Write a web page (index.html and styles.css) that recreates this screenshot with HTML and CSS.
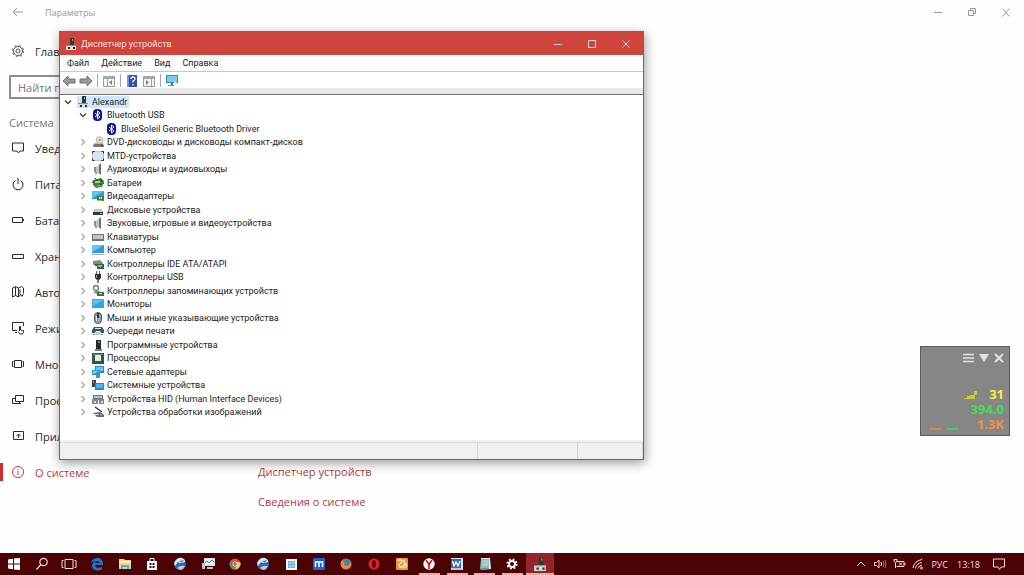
FILE: index.html
```html
<!DOCTYPE html>
<html lang="ru">
<head>
<meta charset="utf-8">
<title>Диспетчер устройств</title>
<link rel="stylesheet" href="styles.css">
</head>
<body>
<svg class="sprite" aria-hidden="true">
  <defs>
    <symbol id="i-pc" viewBox="0 0 12 12"><path d="M5 0h4v7H5z" fill="#303838"/><path d="M7 1h1v2H7z" fill="#5fc26c"/><path d="M1 7h10v5H1z" fill="#d9dcde"/><path d="M1 7h10v1H1z" fill="#8b9094"/><path d="M3 9h2v2H3zM8 9h2v2H8z" fill="#333"/></symbol>
    <symbol id="i-bt" viewBox="0 0 12 12"><rect x="1" y="0" width="9" height="12" rx="4" fill="#0714a8"/><path d="M3 4l5 4-2.500 2V2L8 4 3 8" fill="none" stroke="#fff"/></symbol>
    <symbol id="i-dvd" viewBox="0 0 12 12"><circle cx="7.500" cy="4" r="3.500" fill="#e0e0d8" stroke="#999" stroke-width=".6"/><circle cx="7.500" cy="4" r="1" fill="#888"/><path d="M2 7h9l1 4H1z" fill="#777"/><path d="M2 7h9v1H2z" fill="#bbb"/><path d="M9 9h2v1H9z" fill="#222"/></symbol>
    <symbol id="i-mtd" viewBox="0 0 12 12"><path d="M0 1h12v10H0z" fill="#a9c8dd"/><path d="M1 2h10v8H1z" fill="#d3e6f3"/><path d="M.5 3.500v-2H2.500M9.500 1.500h2v2M11.500 8.500v2H9.500M2.500 10.500h-2v-2" fill="none" stroke="#222b33"/></symbol>
    <symbol id="i-audio" viewBox="0 0 12 12"><path d="M2 4h2v5H2z" fill="#8a8d8f"/><path d="M4 4l5-4v12L4 9z" fill="#c3c6c8"/><path d="M7 2l2-2v12L7 10z" fill="#707375"/><path d="M3 9h2v2H3z" fill="#999"/></symbol>
    <symbol id="i-bat" viewBox="0 0 12 12"><path d="M1 3l8-2 3 3-2 6-6 1-3-3z" fill="#46813e"/><path d="M0 5h7M3 1l6 7M8 2l4 5" stroke="#1f3a20"/><path d="M3 4h5v2H3z" fill="#9fd57c"/><path d="M5 8h4v2H5z" fill="#5fa455"/></symbol>
    <symbol id="i-video" viewBox="0 0 12 12"><path d="M0 1h12v8H0z" fill="#2c9de0"/><path d="M0 1h12L0 8z" fill="#63c3ee"/><path d="M5 6h7v5H5z" fill="#3c7b45"/><path d="M7 7h3v2H7z" fill="#bad6a5"/><path d="M5 10h5v1H5z" fill="#d3ac38"/></symbol>
    <symbol id="i-disk" viewBox="0 0 12 12"><path d="M2 5h8l1 3H1z" fill="#c5c7c8"/><path d="M1 8h10v3H1z" fill="#393c3e"/><path d="M8 9h2v1H8z" fill="#85c9a0"/></symbol>
    <symbol id="i-key" viewBox="0 0 12 12"><path d="M0 3h12v7H0z" fill="#6e7376"/><path d="M1 4h10v4H1z" fill="#bfc4c7"/></symbol>
    <symbol id="i-comp" viewBox="0 0 12 12"><path d="M0 1h12v8H0z" fill="#2c9de0"/><path d="M0 1h12L0 8z" fill="#67c6f2"/><path d="M0 10h12v1H0z" fill="#aab2b7"/></symbol>
    <symbol id="i-ide" viewBox="0 0 12 12"><path d="M1 3l7-1 3 3v2H1z" fill="#828b87"/><path d="M3 6h9v5H5V8H3z" fill="#2c6a42"/><path d="M6 7h4v2H6z" fill="#95b69c"/></symbol>
    <symbol id="i-usb" viewBox="0 0 12 12"><path d="M4 0h1v3H4zM7 0h1v3H7z" fill="#666"/><path d="M3 3h6v4L7 9H5L3 7z" fill="#2c2f30"/><path d="M6 8v4" stroke="#555" stroke-width="1.500"/><path d="M4 4h1v3H4z" fill="#999"/></symbol>
    <symbol id="i-store" viewBox="0 0 12 12"><circle cx="4" cy="3" r="2.500" fill="none" stroke="#687268" stroke-width="1.300"/><path d="M1 8l4-3 6 3-5 1z" fill="#869087"/><path d="M5 7h7v4H5z" fill="#37724a"/><path d="M7 8h3v1H7z" fill="#cce0c4"/></symbol>
    <symbol id="i-mon" viewBox="0 0 12 12"><path d="M0 1h12v9H0z" fill="#5b9cc4"/><path d="M1 2h10v7H1z" fill="#2ea6ec"/><path d="M1 2h10L1 8z" fill="#5cc2f5"/></symbol>
    <symbol id="i-mouse" viewBox="0 0 12 12"><rect x="2.500" y=".5" width="7" height="11" rx="3.500" fill="#9ba4ab" stroke="#44505a"/><path d="M6 1v5" stroke="#263848" stroke-width="2"/><path d="M4.500 4v5" stroke="#dbe0e4"/></symbol>
    <symbol id="i-print" viewBox="0 0 12 12"><path d="M2 2h8l2 3v3H9L8 6H4L3 8H0V5z" fill="#46545c"/><path d="M3 3h6v1H3z" fill="#dfe6ea"/><path d="M4 7h4l1 3H3z" fill="#a4d8ee"/><path d="M1 9h2v1H1zM9 9h2v1H9z" fill="#78858c"/></symbol>
    <symbol id="i-soft" viewBox="0 0 12 12"><path d="M4 1h5v9H4z" fill="#252c2b"/><path d="M6 2h2v2H6z" fill="#54a65e"/><path d="M3 10h7v2H3z" fill="#777e7b"/></symbol>
    <symbol id="i-cpu" viewBox="0 0 12 12"><path d="M0 1h12v11H0z" fill="#2c5b3d"/><path d="M3 3h6v6H3z" fill="#e6ece5"/><path d="M1 2h10v1H1z" fill="#5d8a68"/></symbol>
    <symbol id="i-net" viewBox="0 0 12 12"><path d="M3 0h9v7H3z" fill="#1f8fcb"/><path d="M4 1h7v4H4z" fill="#69c4f0"/><path d="M0 4h8v5H0z" fill="#279bda"/><path d="M1 5h6L1 8z" fill="#88d5f8"/><path d="M4 9h4v3H4z" fill="#4a9e88"/></symbol>
    <symbol id="i-sys" viewBox="0 0 12 12"><path d="M0 1h4v7H0z" fill="#3c4549"/><path d="M1 2h1v2H1z" fill="#80d38d"/><path d="M3 4h9v7H3z" fill="#2288c7"/><path d="M4 5h7v4H4z" fill="#49b4ef"/></symbol>
    <symbol id="i-hid" viewBox="0 0 12 12"><path d="M1 2h10v5H1z" fill="#70777b"/><path d="M2 3h8v2H2z" fill="#bbc1c4"/><path d="M0 6h6v5H0zM7 6h5v5H7z" fill="#80898c"/><path d="M2 8h2v2H2zM9 8h2v2H9z" fill="#d6e2dc"/></symbol>
    <symbol id="i-img" viewBox="0 0 12 12"><path d="M3 1l7 5" stroke="#303536" stroke-width="1.500"/><path d="M1 7l7-1 4 3v2H5z" fill="#666c6e"/><path d="M2 8h5v1H2z" fill="#ddd"/><circle cx="9" cy="9" r="1.200" fill="#d6dadb" stroke="#333" stroke-width=".6"/></symbol>
    <symbol id="open" viewBox="0 0 8 8"><path d="M1 2.500l3 3 3-3" fill="none" stroke="#404040" stroke-width="1.300"/></symbol>
    <symbol id="shut" viewBox="0 0 8 8"><path d="M2.500 1l3 3-3 3" fill="none" stroke="#a2a2a2" stroke-width="1.200"/></symbol>
    <symbol id="globe" viewBox="0 0 14 14"><circle cx="7" cy="7" r="6" fill="#2e69a5"/><path d="M1 6q3-6 8-5 4 2 3 4-5 2-7 0L2 9z" fill="#d7e5ef"/><path d="M4 11q3-3 8-2-2 4-5 4z" fill="#b9cede"/><path d="M6 4l5-1-2 3z" fill="#4f94c9"/></symbol>
    <symbol id="gear" viewBox="0 0 14 14"><circle cx="7" cy="7" r="4.500" fill="none" stroke="#555"/><circle cx="7" cy="7" r="2" fill="none" stroke="#555"/><circle cx="7" cy="7" r="5.500" fill="none" stroke="#777" stroke-width="1.200" stroke-dasharray="2.160 2.160"/></symbol>
  </defs>
</svg>

<div class="desktop">
  <main class="settings">
    <header class="settings-bar">
      <button class="plain" aria-label="Назад"><svg class="ic14" viewBox="0 0 14 14"><path d="M12 7H2M6 3L2 7l4 4"/></svg></button>
      <span class="settings-title">Параметры</span>
      <div class="settings-controls">
        <button class="plain" aria-label="Свернуть"><svg class="ic14" viewBox="0 0 14 14"><path d="M3 7.500h8"/></svg></button>
        <button class="plain" aria-label="Восстановить"><svg class="ic14" viewBox="0 0 14 14"><path d="M3.500 5.500h5v5h-5zM5.500 5V3.500h5v5H9"/></svg></button>
        <button class="plain" aria-label="Закрыть"><svg class="ic14" viewBox="0 0 14 14"><path d="M3.500 3.500l7 8M10.500 3.500l-7 8"/></svg></button>
      </div>
    </header>
    <div class="settings-body">
      <nav class="sidebar">
        <a class="nav home" href="#"><svg class="ic14"><use href="#gear"/></svg>Глав</a>
        <input class="search" type="text" placeholder="Найти параметр" aria-label="Найти параметр">
        <h2 class="group">Система</h2>
        <a class="nav" href="#"><svg class="ic14" viewBox="0 0 14 14"><path d="M1.500 2h11v8H9l-1.500 2L6 10H1.500z"/></svg>Увед</a>
        <a class="nav" href="#"><svg class="ic14" viewBox="0 0 14 14"><path d="M4.500 3.500a5 5 0 1 0 5 0M7 1v6"/></svg>Пита</a>
        <a class="nav" href="#"><svg class="ic14" viewBox="0 0 14 14"><path d="M1.500 4.500h10v5h-10zM12.500 6v2"/></svg>Бата</a>
        <a class="nav" href="#"><svg class="ic14" viewBox="0 0 14 14"><path d="M1.500 5.500h11v4h-11z"/></svg>Хран</a>
        <a class="nav" href="#"><svg class="ic14" viewBox="0 0 14 14"><path d="M1.500 3l3-1.500 3 1.500v9l-3-1.500-3 1.500zM4.500 2v8.500M7.500 3l3-1.500 2 1.500v5M7.500 11.500l2-1M9 4.500v4l2 3 1.500-3"/></svg>Авто</a>
        <a class="nav" href="#"><svg class="ic14" viewBox="0 0 14 14"><path d="M6 9.500H1.500v-8h11V5M4 11.500h2M8.500 10V5.500h1V9l3 .5v2l-1 1.500H9L7 10.500"/></svg>Режи</a>
        <a class="nav" href="#"><svg class="ic14" viewBox="0 0 14 14"><path d="M3.500 3.500h7v7h-7zM2.500 4.500h-1v5h1M11.500 4.500h1v5h-1"/></svg>Мно</a>
        <a class="nav" href="#"><svg class="ic14" viewBox="0 0 14 14"><path d="M4.500 2.500h8v6h-8zM4 5.500H1.500v5h7V9M8 10.500h2"/></svg>Прое</a>
        <a class="nav" href="#"><svg class="ic14" viewBox="0 0 14 14"><path d="M2.500 2.500h10v8h-10zM7.500 9V5M5.500 7l2-2 2 2"/></svg>Прил</a>
        <a class="nav current" href="#"><svg class="ic14" viewBox="0 0 14 14"><circle cx="7" cy="7" r="5.500"/><path d="M7 6v4M7 4v1"/></svg>О системе</a>
      </nav>
      <section class="related">
        <a href="#">Диспетчер устройств</a>
        <a href="#">Сведения о системе</a>
      </section>
    </div>
  </main>

  <section class="dialog" aria-label="Диспетчер устройств">
    <header class="dialog-bar">
      <svg class="ic12"><use href="#i-pc"/></svg>
      <span class="dialog-title">Диспетчер устройств</span>
      <button class="plain" aria-label="Свернуть"><svg class="ic14" viewBox="0 0 14 14"><path d="M3 7.500h8"/></svg></button>
      <button class="plain" aria-label="Развернуть"><svg class="ic14" viewBox="0 0 14 14"><path d="M3.500 3.500h7v7h-7z"/></svg></button>
      <button class="plain" aria-label="Закрыть"><svg class="ic14" viewBox="0 0 14 14"><path d="M3.500 3.500l7 7M10.500 3.500l-7 7"/></svg></button>
    </header>
    <nav class="menu">
      <button class="plain">Файл</button><button class="plain">Действие</button><button class="plain">Вид</button><button class="plain">Справка</button>
    </nav>
    <div class="tools">
      <button class="plain" aria-label="Назад"><svg class="tool" viewBox="0 0 14 12"><path d="M1 6l5-5v3h7v4H6v3z" fill="#9a9a9a" stroke="#6f6f6f"/></svg></button>
      <button class="plain" aria-label="Вперёд"><svg class="tool" viewBox="0 0 14 12"><path d="M13 6L8 1v3H1v4h7v3z" fill="#9a9a9a" stroke="#6f6f6f"/></svg></button>
      <span class="sep"></span>
      <button class="plain" aria-label="Дерево консоли"><svg class="tool" viewBox="0 0 14 12"><path d="M1.500 1.500h11v10h-11z" fill="#f4f4f0" stroke="#9b9b94"/><path d="M1 1h12v3H1z" fill="#a4aaa8"/><path d="M5.500 4v7" stroke="#9aa0a0"/><path d="M10 5v5L7 7.500z" fill="#56a255"/></svg></button>
      <span class="sep"></span>
      <button class="plain" aria-label="Справка"><svg class="tool" viewBox="0 0 14 12"><path d="M2 0h10v12H2z" fill="#2f50ac"/><path d="M2 0h2v12H2z" fill="#7993d3"/><path d="M6 4q0-2 2-2t2 2q0 1-2 2v1.500M8 9v1.500" fill="none" stroke="#fff" stroke-width="1.300"/></svg></button>
      <button class="plain" aria-label="Панель действий"><svg class="tool" viewBox="0 0 14 12"><path d="M1.500 1.500h11v10h-11z" fill="#f4f4f0" stroke="#9b9b94"/><path d="M1 1h12v3H1z" fill="#a4aaa8"/><path d="M9.500 4v7" stroke="#9aa0a0"/><path d="M4 5v5l3-2.500z" fill="#56a255"/></svg></button>
      <span class="sep"></span>
      <button class="plain" aria-label="Обновить конфигурацию"><svg class="tool" viewBox="0 0 14 12"><path d="M1 0h12v8H1z" fill="#2d8fc6"/><path d="M2 1h10v6H2z" fill="#7accee"/><path d="M3 10h6v1H3z" fill="#7b8a92"/><path d="M6 8h2v2H6z" fill="#58656c"/><path d="M9 6l3 2-3 3z" fill="#dce9ee"/></svg></button>
    </div>
    <ul class="tree">
      <li class="row"><svg class="ic8"><use href="#open"/></svg><span class="label picked"><svg class="ic12"><use href="#i-pc"/></svg>Alexandr</span></li>
      <li class="row l1"><svg class="ic8"><use href="#open"/></svg><span class="label"><svg class="ic12"><use href="#i-bt"/></svg>Bluetooth USB</span></li>
      <li class="row l2"><span class="label"><svg class="ic12"><use href="#i-bt"/></svg>BlueSoleil Generic Bluetooth Driver</span></li>
      <li class="row l1"><svg class="ic8"><use href="#shut"/></svg><span class="label"><svg class="ic12"><use href="#i-dvd"/></svg>DVD-дисководы и дисководы компакт-дисков</span></li>
      <li class="row l1"><svg class="ic8"><use href="#shut"/></svg><span class="label"><svg class="ic12"><use href="#i-mtd"/></svg>MTD-устройства</span></li>
      <li class="row l1"><svg class="ic8"><use href="#shut"/></svg><span class="label"><svg class="ic12"><use href="#i-audio"/></svg>Аудиовходы и аудиовыходы</span></li>
      <li class="row l1"><svg class="ic8"><use href="#shut"/></svg><span class="label"><svg class="ic12"><use href="#i-bat"/></svg>Батареи</span></li>
      <li class="row l1"><svg class="ic8"><use href="#shut"/></svg><span class="label"><svg class="ic12"><use href="#i-video"/></svg>Видеоадаптеры</span></li>
      <li class="row l1"><svg class="ic8"><use href="#shut"/></svg><span class="label"><svg class="ic12"><use href="#i-disk"/></svg>Дисковые устройства</span></li>
      <li class="row l1"><svg class="ic8"><use href="#shut"/></svg><span class="label"><svg class="ic12"><use href="#i-audio"/></svg>Звуковые, игровые и видеоустройства</span></li>
      <li class="row l1"><svg class="ic8"><use href="#shut"/></svg><span class="label"><svg class="ic12"><use href="#i-key"/></svg>Клавиатуры</span></li>
      <li class="row l1"><svg class="ic8"><use href="#shut"/></svg><span class="label"><svg class="ic12"><use href="#i-comp"/></svg>Компьютер</span></li>
      <li class="row l1"><svg class="ic8"><use href="#shut"/></svg><span class="label"><svg class="ic12"><use href="#i-ide"/></svg>Контроллеры IDE ATA/ATAPI</span></li>
      <li class="row l1"><svg class="ic8"><use href="#shut"/></svg><span class="label"><svg class="ic12"><use href="#i-usb"/></svg>Контроллеры USB</span></li>
      <li class="row l1"><svg class="ic8"><use href="#shut"/></svg><span class="label"><svg class="ic12"><use href="#i-store"/></svg>Контроллеры запоминающих устройств</span></li>
      <li class="row l1"><svg class="ic8"><use href="#shut"/></svg><span class="label"><svg class="ic12"><use href="#i-mon"/></svg>Мониторы</span></li>
      <li class="row l1"><svg class="ic8"><use href="#shut"/></svg><span class="label"><svg class="ic12"><use href="#i-mouse"/></svg>Мыши и иные указывающие устройства</span></li>
      <li class="row l1"><svg class="ic8"><use href="#shut"/></svg><span class="label"><svg class="ic12"><use href="#i-print"/></svg>Очереди печати</span></li>
      <li class="row l1"><svg class="ic8"><use href="#shut"/></svg><span class="label"><svg class="ic12"><use href="#i-soft"/></svg>Программные устройства</span></li>
      <li class="row l1"><svg class="ic8"><use href="#shut"/></svg><span class="label"><svg class="ic12"><use href="#i-cpu"/></svg>Процессоры</span></li>
      <li class="row l1"><svg class="ic8"><use href="#shut"/></svg><span class="label"><svg class="ic12"><use href="#i-net"/></svg>Сетевые адаптеры</span></li>
      <li class="row l1"><svg class="ic8"><use href="#shut"/></svg><span class="label"><svg class="ic12"><use href="#i-sys"/></svg>Системные устройства</span></li>
      <li class="row l1"><svg class="ic8"><use href="#shut"/></svg><span class="label"><svg class="ic12"><use href="#i-hid"/></svg>Устройства HID (Human Interface Devices)</span></li>
      <li class="row l1"><svg class="ic8"><use href="#shut"/></svg><span class="label"><svg class="ic12"><use href="#i-img"/></svg>Устройства обработки изображений</span></li>
    </ul>
    <footer class="status"><span class="cell wide"></span><span class="cell mid"></span><span class="cell end"></span></footer>
  </section>

  <aside class="meter">
    <div class="meter-tools">
      <button class="plain" aria-label="Меню"><svg class="ic12" viewBox="0 0 12 12"><path d="M0 2.500h11M0 6h11M0 9.500h11" stroke="#e2e2e2" stroke-width="1.500"/></svg></button>
      <button class="plain" aria-label="Свернуть"><svg class="ic12" viewBox="0 0 12 12"><path d="M1 2h10L6 10z" fill="#e2e2e2"/></svg></button>
      <button class="plain" aria-label="Закрыть"><svg class="ic12" viewBox="0 0 12 12"><path d="M2 2l8 8M10 2l-8 8" stroke="#e2e2e2" stroke-width="2"/></svg></button>
    </div>
    <div class="meter-row yellow"><svg class="spark" viewBox="0 0 14 10"><path d="M0 8h3V6h3V5h4V1h3v4h-2v4H0z" fill="#c9c93c"/></svg>31</div>
    <div class="meter-row green">394.0</div>
    <div class="meter-row orange"><span class="dash a"></span><span class="dash b"></span>1.3K</div>
  </aside>
</div>

<footer class="taskbar">
  <div class="apps">
    <button class="app" aria-label="Пуск"><svg class="ic14" viewBox="0 0 14 14"><path d="M1 2.500l5-.8v4.800H1zM7 1.600L13 1v5.500H7zM1 7.500h5v4.800l-5-.8zM7 7.500h6V13l-6-.6z" fill="#fff"/></svg></button>
    <button class="app" aria-label="Поиск"><svg class="ic14" viewBox="0 0 14 14"><circle cx="8.500" cy="5" r="3.700" fill="none" stroke="#f1dede" stroke-width="1.200"/><path d="M6 7.500L1.500 12.500" stroke="#f1dede" stroke-width="1.200"/></svg></button>
    <button class="app" aria-label="Представление задач"><svg class="ic16" viewBox="0 0 16 14"><path d="M4 2.500h8v9H4zM2.500 3.500H1v7h1.500M13.500 3.500H15v7h-1.500" fill="none" stroke="#f1dede"/></svg></button>
    <button class="app" aria-label="Edge"><svg class="ic14" viewBox="0 0 14 14"><path d="M1 6.500C2 2 5 1 7.500 1 11 1 13 3.500 13 8H5c.3 3 4 3.500 7 2v2.500C7 14.500 2 13 2 8.800 2 7 3.500 5 5.500 4.300 3.500 4.500 2 5 1 6.500zM5 6h4.500C9.500 3.500 5.500 3.500 5 6z" fill="#1577cf"/></svg></button>
    <button class="app" aria-label="Проводник"><svg class="ic14" viewBox="0 0 14 14"><path d="M1 2h5l1 1h6v9H1z" fill="#f2d583"/><path d="M1 4h12v2H1z" fill="#fff0bd"/><path d="M3 8h8v4H9v-2H5v2H3z" fill="#49b4d2"/></svg></button>
    <button class="app" aria-label="Магазин"><svg class="ic14" viewBox="0 0 14 14"><path d="M2 4h10v9H2z" fill="#fff"/><path d="M5 4V1.500h4V4" fill="none" stroke="#fff"/><path d="M4.500 6h2v2h-2zM7.500 6h2v2h-2zM4.500 9h2v2h-2zM7.500 9h2v2h-2z" fill="#500406"/></svg></button>
    <button class="app" aria-label="Браузер"><svg class="ic14"><use href="#globe"/></svg></button>
    <button class="app" aria-label="Монитор системы"><svg class="ic14" viewBox="0 0 14 14"><path d="M3 1h11v8H3z" fill="#d3dbdc"/><path d="M4 2h9v6H4z" fill="#e9f1f1"/><path d="M4 6l2-2 2 2 3-3 2 2" fill="none" stroke="#3f959e"/><path d="M1 6h3v6H1zM6 10h6v2H6z" fill="#bfc4c6"/></svg></button>
    <button class="app" aria-label="Chrome"><svg class="ic14" viewBox="0 0 14 14"><circle cx="7" cy="7" r="5.500" fill="#e04a3b"/><path d="M2 5l5 8A6 6 0 0 1 2 5z" fill="#39a354"/><path d="M7 12.500L9.500 5h2.600A5.500 5.500 0 0 1 7 12.500z" fill="#f4cd34"/><circle cx="7" cy="7" r="2.500" fill="#fff"/><circle cx="7" cy="7" r="1.900" fill="#4b86dd"/></svg></button>
    <button class="app" aria-label="Браузер 2"><svg class="ic14"><use href="#globe"/></svg></button>
    <button class="app" aria-label="Таблица"><svg class="ic14" viewBox="0 0 14 14"><path d="M2 2h11v11H2z" fill="#f3f7fa"/><path d="M4 4h7v7H4z" fill="#55aec9"/><path d="M6 4v7M9 4v7M4 6h7M4 9h7" stroke="#d8f1f7" stroke-width=".6"/></svg></button>
    <button class="app" aria-label="Maxthon"><svg class="ic14" viewBox="0 0 14 14"><rect x="1" y="1" width="12" height="12" rx="1" fill="#1865d8"/><path d="M3.500 10V5h7v5M7 5v5" fill="none" stroke="#fff" stroke-width="1.500"/></svg></button>
    <button class="app" aria-label="Firefox"><svg class="ic14" viewBox="0 0 14 14"><circle cx="7" cy="7" r="5.500" fill="#e77b24"/><circle cx="7.500" cy="6" r="4" fill="#3a85c0"/><path d="M2 4l2 0 2 2-1 2 4 1 2-3 1.500 1-2 4-5 1-3-3z" fill="#ed8c2b"/></svg></button>
    <button class="app" aria-label="Opera"><svg class="ic14" viewBox="0 0 14 14"><circle cx="7" cy="7" r="5.500" fill="#dc2030"/><ellipse cx="7" cy="7" rx="2" ry="3.700" fill="#510507"/></svg></button>
    <button class="app" aria-label="UC"><svg class="ic14" viewBox="0 0 14 14"><rect x="1" y="1" width="12" height="12" rx="1" fill="#f0942f"/><path d="M3 4q3-3 4 0-1 2-3 4 0 3 3 2l3-3M10 3q-3 2 0 3 2 1 1 3-1 2-3 2" fill="none" stroke="#fff3dc" stroke-width="1.300"/></svg></button>
    <button class="app running" aria-label="Яндекс"><svg class="ic14" viewBox="0 0 14 14"><circle cx="7" cy="7" r="5.700" fill="#fff"/><path d="M4 3l3 4.500L10 3M7 7v5" fill="none" stroke="#c91e27" stroke-width="1.700"/></svg></button>
    <button class="app running" aria-label="Word"><svg class="ic14" viewBox="0 0 14 14"><path d="M1 1h12v12H1z" fill="#dce8f6"/><path d="M1 2h10v9H1z" fill="#3a65b1"/><path d="M2.500 4l1.500 5 2-4 2 4 2-5" fill="none" stroke="#fff" stroke-width="1.300"/><path d="M2 12h10" stroke="#85a8da"/></svg></button>
    <button class="app running" aria-label="Блокнот"><svg class="ic14" viewBox="0 0 14 14"><path d="M3 1h9l1 11-10 1z" fill="#e4f0ee"/><path d="M3 2h8v10H2z" fill="#8bbac0"/><path d="M4 4h6M4 6h6M4 8h6" stroke="#bbdcdf"/><path d="M2 12h9" stroke="#55777c"/></svg></button>
    <button class="app running" aria-label="Параметры"><svg class="ic14" viewBox="0 0 14 14"><circle cx="7" cy="7" r="3" fill="none" stroke="#fff" stroke-width="2"/><circle cx="7" cy="7" r="4.700" fill="none" stroke="#fff" stroke-width="1.800" stroke-dasharray="1.850 1.850"/></svg></button>
    <button class="app running active" aria-label="Диспетчер устройств"><svg class="ic14"><use href="#i-pc"/></svg></button>
  </div>
  <div class="tray">
    <svg class="ic14" viewBox="0 0 14 14"><path d="M3 9l4-4 4 4"/></svg>
    <svg class="ic14" viewBox="0 0 14 14"><path d="M1.500 5.500h2L6 3v8L3.500 8.500h-2zM8 5q1 2 0 4"/><path d="M10 4q2 3 0 6M12 3q2 4 0 8" stroke-opacity=".5"/></svg>
    <svg class="ic14" viewBox="0 0 14 14"><path d="M4.500 4.500H12v5H4.500M13 6v2M7 5.500l3 3M10 5.500l-3 3M2 2.500v2q1.500 2 3 0v-2zM3.500 6v5"/></svg>
    <svg class="ic14" viewBox="0 0 14 14"><path d="M2 11Q3 4 11 2.500M4.500 11.500Q5 6.500 11 5.500M7 11.500Q8 8.500 11 8"/><circle cx="10.500" cy="11" r="1"/></svg>
    <span class="lang">РУС</span>
    <time class="clock">13:18</time>
    <svg class="ic14" viewBox="0 0 14 14"><path d="M1.500 2h11v8H9l-1.500 2.500L6 10H1.500z"/></svg>
  </div>
</footer>
</body>
</html>
```
FILE: styles.css
```css
* { box-sizing: border-box; }
body {
  margin: 0;
  min-height: 100vh;
  display: flex;
  flex-direction: column;
  background: #fefefe;
  color: #2b2b2b;
  font-family: "Open Sans", "Noto Sans", sans-serif;
  font-size: 11px;
}
a { color: inherit; text-decoration: none; }
svg { flex: none; display: block; }
.sprite { position: absolute; width: 0; height: 0; }
.plain { border: 0; padding: 0; background: none; font: inherit; color: inherit; display: block; }
.ic8 { width: 8px; height: 8px; }
.ic12 { width: 12px; height: 12px; }
.ic14 { width: 14px; height: 14px; }
.ic16 { width: 16px; height: 14px; }

.desktop { flex: 1; position: relative; display: flex; overflow: hidden; }
.settings { flex: 1; display: flex; flex-direction: column; }
.settings-bar { display: flex; align-items: center; height: 24px; padding: 0 11px; color: #999; font-size: 9px; }
.settings-bar svg, .nav svg, .dialog-bar .plain svg, .tray svg { fill: none; stroke: currentColor; }
.settings-title { margin-left: 20px; }
.settings-controls { margin-left: auto; display: flex; gap: 20px; }
.settings-body { display: flex; flex: 1; }

.sidebar { width: 234px; display: flex; flex-direction: column; padding-top: 9px; }
.nav { display: flex; align-items: center; gap: 10px; height: 36px; padding-left: 11px; white-space: nowrap; }
.search {
  height: 24px;
  margin: 6px 24px 0 9px;
  padding: 0 7px;
  border: 2px solid #8d8d8d;
  font: inherit;
  background: #fff;
}
.search::placeholder { color: #767676; }
.group { margin: 16px 0 0; padding-left: 9px; height: 15px; font-size: 11px; line-height: 16px; font-weight: 400; color: #777; }
.current { color: #c93a3c; }
.current::before { content: ""; width: 3px; height: 18px; margin: 0 -2px 0 -11px; background: #d02a31; }
.related { display: flex; flex-direction: column; gap: 14px; padding: 440px 0 0 24px; line-height: 16px; color: #b33d40; }

.dialog {
  position: absolute;
  left: 59px;
  top: 31px;
  width: 585px;
  display: flex;
  flex-direction: column;
  border: 1px solid #b5484a;
  background: #fff;
  box-shadow: 1px 3px 10px rgba(0, 0, 0, .4);
  font-family: Roboto, "Open Sans", sans-serif;
  font-size: 9px;
  color: #1c1c1c;
}
.dialog-bar { display: flex; align-items: center; gap: 20px; height: 23px; padding: 0 10px 0 5px; background: #d0443e; color: #fbdedb; }
.dialog-title { flex: 1; margin-left: -16px; }
.menu { display: flex; gap: 12px; height: 17px; padding-left: 7px; border-bottom: 1px solid #c9c9c9; }
.tools { display: flex; align-items: center; gap: 3px; height: 17px; padding-left: 2px; }
.tool { width: 14px; height: 12px; }
.sep { width: 1px; height: 13px; margin: 0 1px; background: #a8a8a8; }
.tree {
  list-style: none;
  margin: 5px 0 0;
  padding: 0 0 0 4px;
  border-top: 1px solid #6f6f6f;
  box-shadow: 0 -6px 0 #e9e9e9;
  height: 325px;
  display: grid;
  grid-auto-rows: 1fr;
}
.row { display: flex; align-items: center; gap: 5px; min-height: 0; }
.l1 { padding-left: 15px; }
.l2 { padding-left: 42px; }
.label { display: flex; align-items: center; gap: 3px; line-height: 12px; white-space: nowrap; }
.picked { background: #cce8ff; padding-right: 2px; }
.status { display: flex; height: 19px; margin-top: 21px; padding-top: 2px; background: #f0f0f0; }
.cell { border-top: 1px solid #dcdcdc; border-right: 1px solid #d4d4d4; }
.wide { flex: 1; }
.mid { width: 100px; }
.end { width: 65px; }

.meter {
  position: absolute;
  right: 14px;
  top: 346px;
  width: 90px;
  height: 90px;
  display: flex;
  flex-direction: column;
  padding: 5px 5px 3px 8px;
  background: #868686;
  border: 1px solid #5c5c5c;
  font-weight: 700;
  font-size: 13px;
}
.meter-tools { display: flex; justify-content: flex-end; gap: 3px; margin: 0 -1px auto 0; }
.meter-row { display: flex; justify-content: flex-end; align-items: center; line-height: 15px; }
.spark { width: 14px; height: 10px; margin-right: 11px; }
.yellow { color: #f4f43a; }
.green { color: #3fe04c; }
.orange { color: #ee9440; }
.dash { width: 12px; height: 2px; margin: 8px 6px 0 0; background: #d98746; }
.b { background: #45cf58; margin-right: auto; }

.taskbar { display: flex; justify-content: space-between; height: 22px; background: #4b0406; color: #f3dcdc; }
.apps { display: grid; grid-template-columns: repeat(20, 1fr); width: 554px; }
.app { display: flex; align-items: center; justify-content: center; border: 0; padding: 0; background: none; }
.running { background: linear-gradient(#f3a9a9, #f3a9a9) center bottom / 21px 2px no-repeat; }
.active { background: linear-gradient(#f3a9a9, #f3a9a9) center bottom / 100% 2px no-repeat #92242a; }
.tray { display: flex; align-items: center; gap: 5px; padding-right: 18px; font-size: 9px; }
.lang { margin-left: 1px; }
.clock { margin: 0 7px 0 4px; }
```
